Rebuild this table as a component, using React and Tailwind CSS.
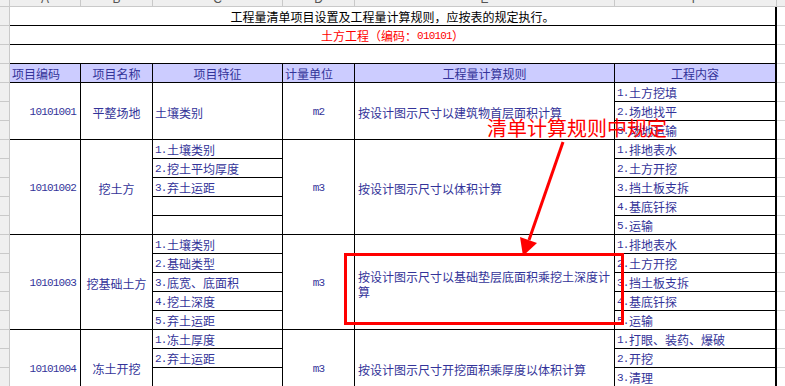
const ROWS = [
  {
    code: '10101001',
    name: '平整场地',
    single: '土壤类别',
    features: [],
    unit: 'm2',
    rule: '按设计图示尺寸以建筑物首层面积计算',
    content: ['土方挖填', '场地找平', '场地运输'],
  },
  {
    code: '10101002',
    name: '挖土方',
    features: ['土壤类别', '挖土平均厚度', '弃土运距', '', ''],
    unit: 'm3',
    rule: '按设计图示尺寸以体积计算',
    content: ['排地表水', '土方开挖', '挡土板支拆', '基底钎探', '运输'],
  },
  {
    code: '10101003',
    name: '挖基础土方',
    features: ['土壤类别', '基础类型', '底宽、底面积', '挖土深度', '弃土运距'],
    unit: 'm3',
    rule: '按设计图示尺寸以基础垫层底面积乘挖土深度计算',
    content: ['排地表水', '土方开挖', '挡土板支拆', '基底钎探', '运输'],
  },
  {
    code: '10101004',
    name: '冻土开挖',
    features: ['冻土厚度', '弃土运距', '', ''],
    unit: 'm3',
    rule: '按设计图示尺寸开挖面积乘厚度以体积计算',
    content: ['打眼、装药、爆破', '开挖', '清理', ''],
  },
];

const LETTERS = [
  { l: 'A', w: 'w-[71px]' },
  { l: 'B', w: 'w-[72px]' },
  { l: 'C', w: 'w-[130px]' },
  { l: 'D', w: 'w-[72px]' },
  { l: 'E', w: 'w-[260px]' },
  { l: 'F', w: 'w-[162px]' },
];

// latin digits in the sheet are narrow, like SimSun's half-width cells
const num = "font-['Liberation_Mono',monospace] text-[11px] tracking-[-0.8px]";

const Item = ({ idx, text }) => (
  <div className="h-[19px] border-b border-black flex items-center pt-[2px] pl-[2px] whitespace-nowrap overflow-hidden">
    {text && (
      <>
        <span className={`inline-block w-[12px] ${num}`}>{idx}.</span>
        <span>{text}</span>
      </>
    )}
  </div>
);

const DataRow = ({ row }) => (
  <div className="flex text-[#333399]">
    <div className={`w-[71px] border-r border-b border-black flex items-center justify-end pr-[4px] pt-[3px] ${num}`}>
      {row.code}
    </div>
    <div className="w-[72px] border-r border-b border-black flex items-center justify-center pt-[3px]">
      {row.name}
    </div>
    <div className="w-[130px] border-r border-black flex flex-col">
      {row.single ? (
        <div className="flex-1 border-b border-black flex items-center pl-[2px] pt-[3px]">{row.single}</div>
      ) : (
        row.features.map((f, i) => <Item key={i} idx={i + 1} text={f} />)
      )}
    </div>
    <div className={`w-[72px] border-r border-b border-black flex items-center justify-center pt-[3px] ${num}`}>
      {row.unit}
    </div>
    <div className="w-[260px] border-r border-b border-black flex items-center pl-[3px] pr-[1px] pt-[3px] leading-[15px]">
      {row.rule}
    </div>
    <div className="w-[162px] border-r-2 border-black flex flex-col">
      {row.content.map((c, i) => (
        <Item key={i} idx={i + 1} text={c} />
      ))}
    </div>
  </div>
);

export default function App() {
  const gutterRows = Array.from({ length: 21 });

  return (
    <div className="relative w-[785px] h-[386px] overflow-hidden bg-white font-['Noto_Sans_CJK_SC',sans-serif] text-[12px]">
      {/* column letters */}
      <div className="flex h-[7px] bg-[#efefef] border-b border-[#c9c9c9] overflow-hidden text-[#555] font-['Liberation_Sans',sans-serif] text-[12px] leading-[12px]">
        <div className="w-[10px] border-r border-[#c9c9c9]" />
        {LETTERS.map((c) => (
          <div key={c.l} className={`${c.w} border-r border-[#c9c9c9] flex justify-center -mt-[7px]`}>
            {c.l}
          </div>
        ))}
        <div className="flex-1" />
      </div>

      <div className="flex">
        {/* row gutter */}
        <div className="w-[10px] bg-[#efefef] border-r border-[#c9c9c9] flex flex-col">
          {gutterRows.map((_, i) => (
            <div key={i} className="h-[19px] border-b border-[#c9c9c9] shrink-0" />
          ))}
        </div>

        {/* sheet */}
        <div className="w-[767px] flex flex-col">
          <div className="h-[19px] border-b border-r-2 border-black flex items-center justify-center pt-[2px] text-black">
            工程量清单项目设置及工程量计算规则，应按表的规定执行。
          </div>
          <div className="h-[19px] border-b border-r-2 border-black flex items-center justify-center pt-[2px] text-[#ff0000]">
            土方工程（编码：<span className={num}>010101</span>）
          </div>
          <div className="h-[19px] border-b border-r-2 border-black" />

          <div className="flex h-[19px] bg-[#ccccff] text-[#333399]">
            <div className="w-[71px] border-r border-b border-black flex items-center pl-[2px] pt-[2px]">项目编码</div>
            <div className="w-[72px] border-r border-b border-black flex items-center justify-center pt-[2px]">项目名称</div>
            <div className="w-[130px] border-r border-b border-black flex items-center justify-center pt-[2px]">项目特征</div>
            <div className="w-[72px] border-r border-b border-black flex items-center pl-[2px] pt-[2px]">计量单位</div>
            <div className="w-[260px] border-r border-b border-black flex items-center justify-center pt-[2px]">工程量计算规则</div>
            <div className="w-[162px] border-r-2 border-b border-black flex items-center justify-center pt-[2px]">工程内容</div>
          </div>

          {ROWS.map((row) => (
            <DataRow key={row.code} row={row} />
          ))}
        </div>

        {/* right of the sheet */}
        <div className="flex-1 flex flex-col">
          {gutterRows.map((_, i) => (
            <div key={i} className="h-[19px] border-b border-[#d4d4d4] shrink-0" />
          ))}
        </div>
      </div>

      {/* annotation */}
      <div className="absolute left-[487px] top-[116px] text-[20px] leading-[24px] text-[#ff0000] whitespace-nowrap">
        清单计算规则中规定
      </div>
      <svg className="absolute left-0 top-0" width="785" height="386" viewBox="0 0 785 386">
        <line x1="563" y1="142" x2="529" y2="240" stroke="#ff0000" strokeWidth="3" />
        <polygon points="523,256 520,237 537,243" fill="#ff0000" />
      </svg>
      <div className="absolute left-[344px] top-[253px] w-[280px] h-[72px] border-[3px] border-[#ff0000]" />
    </div>
  );
}
